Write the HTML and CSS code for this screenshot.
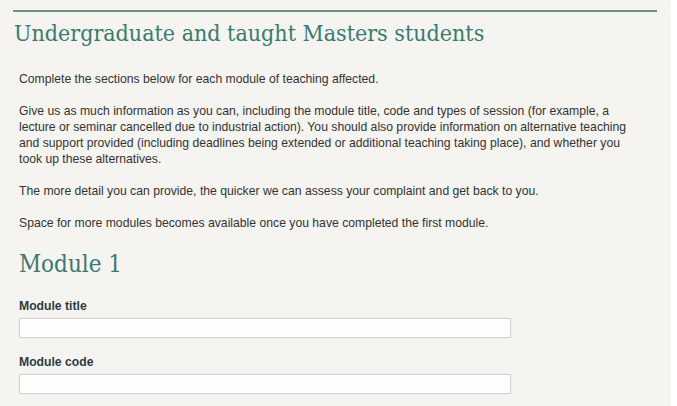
FILE: index.html
```html
<!DOCTYPE html>
<html lang="en">
<head>
<meta charset="utf-8">
<title>Undergraduate and taught Masters students</title>
<link rel="stylesheet" href="styles.css">
</head>
<body>
<div class="page">
  <hr class="rule">
  <h1 class="title">Undergraduate and taught Masters students</h1>
  <div class="content">
    <p>Complete the sections below for each module of teaching affected.</p>
    <p>Give us as much information as you can, including the module title, code and types of session (for example, a lecture or seminar cancelled due to industrial action). You should also provide information on alternative teaching and support provided (including deadlines being extended or additional teaching taking place), and whether you took up these alternatives.</p>
    <p>The more detail you can provide, the quicker we can assess your complaint and get back to you.</p>
    <p>Space for more modules becomes available once you have completed the first module.</p>
    <h2 class="module">Module 1</h2>
    <div class="field">
      <label class="label" for="mtitle">Module title</label>
      <input class="input" id="mtitle" type="text">
    </div>
    <div class="field">
      <label class="label" for="mcode">Module code</label>
      <input class="input" id="mcode" type="text">
    </div>
  </div>
</div>
</body>
</html>
```
FILE: styles.css
```css
html, body {
  margin: 0;
  padding: 0;
  background: #ffffff;
}
.page {
  width: 671px;
  height: 406px;
  overflow: hidden;
  background: #f5f4f1;
  padding-top: 10px;
  box-sizing: border-box;
}
.rule {
  margin: 0 14px 0 13px;
  border: 0;
  border-top: 2px solid #6e9287;
  height: 0;
}
.title {
  margin: 6px 0 0 14px;
  font-family: "DejaVu Serif Condensed", "DejaVu Serif", Georgia, serif;
  font-stretch: condensed;
  font-weight: normal;
  font-size: 23px;
  line-height: 30px;
  color: #3b7a6f;
}
.content {
  padding: 0 33px 0 19px;
  font-family: "Liberation Sans", Arial, sans-serif;
  font-size: 12.2px;
  line-height: 16px;
  color: #333333;
}
.content p {
  margin: 16px 0 0 0;
}
.content p:first-child {
  margin-top: 23px;
}
.module {
  margin: 18px 0 0 0;
  font-family: "DejaVu Serif Condensed", "DejaVu Serif", Georgia, serif;
  font-stretch: condensed;
  font-weight: normal;
  font-size: 24px;
  line-height: 30px;
  color: #3b7a6f;
}
.field {
  margin-top: 19px;
  display: flex;
  flex-direction: column;
  gap: 4px;
}
.field + .field {
  margin-top: 16px;
}
.label {
  font-weight: bold;
  font-size: 12.2px;
  line-height: 16px;
  color: #2f3b44;
}
.input {
  width: 492px;
  height: 20px;
  box-sizing: border-box;
  margin: 0;
  border: 1px solid #d3d3d3;
  background: #fefefe;
  box-shadow: 0 0 2px rgba(0,0,0,0.04);
  padding: 0 4px;
}
```
